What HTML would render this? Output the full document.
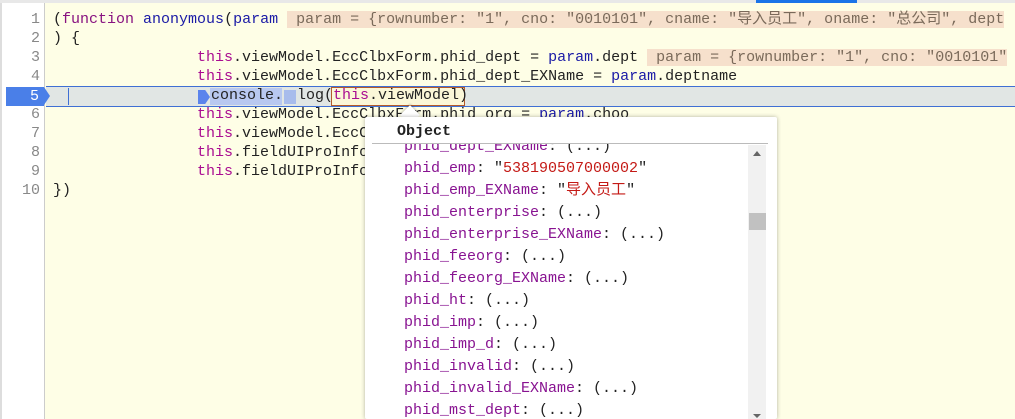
<!DOCTYPE html>
<html style="overflow:hidden"><head><meta charset="utf-8"><style>
*{margin:0;padding:0;box-sizing:border-box}
html,body{width:1015px;height:419px;overflow:hidden}
body{background:#fefee6;position:relative;font-family:"Liberation Mono","Noto Sans CJK SC",monospace;font-size:15px}
.topbar{position:absolute;left:0;top:0;width:1015px;height:3px;background:#e8e8e8}
.topblue{position:absolute;left:756px;top:0;width:101px;height:3px;background:#1a73e8}
.gutter{position:absolute;left:0;top:3px;width:45px;height:416px;background:#fff;border-left:2px solid #ddd;border-right:1px solid #ccc}
.ln{position:absolute;left:0;width:40px;text-align:right;color:#888;line-height:19px}
.code{position:absolute;left:53px;white-space:pre;line-height:19px;color:#222}
.k{color:#881280}.n{color:#1a1aa6}.kw{color:#aa0d91}
.inl{background:#f6e0cc;color:#7a6a5a}
.hl{position:absolute;left:46px;top:86px;width:969px;height:21px;background:#e1e6e4;border-top:1px solid #3f6fd4;border-bottom:1px solid #3f6fd4}
.ln5{position:absolute;left:6px;top:87px;width:38px;height:19px;background:#4a7fe8;color:#fff;text-align:right;padding-right:5px;line-height:19px}
.ln5:after{content:"";position:absolute;right:-6px;top:0;border-left:6px solid #4a7fe8;border-top:9.5px solid transparent;border-bottom:9.5px solid transparent}
.pop{position:absolute;left:365px;top:117px;width:412px;height:302px;background:#fff;box-shadow:0 0 4px rgba(0,0,0,.3);border-radius:2px}
.pop .hd{position:absolute;left:32px;top:6px;font-weight:bold;color:#222}
.pop .sep{position:absolute;left:7px;top:26px;width:396px;height:1px;background:#bbb}
.row{position:absolute;left:39px;line-height:22px;white-space:pre;color:#222}
.row .k{color:#881391}.s{color:#c41a16}
.sb{position:absolute;left:748px;top:145px;width:18px;height:274px;background:#f1f1f1}
</style></head><body>
<div class="topbar"></div><div class="topblue"></div>
<div class="gutter"></div>
<div class="hl"></div>
<div style="position:absolute;left:68px;top:88px;width:1px;height:17px;background:#3f6fd4"></div>
<div class="ln" style="top:10px">1</div>
<div class="ln" style="top:29px">2</div>
<div class="ln" style="top:48px">3</div>
<div class="ln" style="top:67px">4</div>
<div class="ln5">5</div>
<div class="ln" style="top:105px">6</div>
<div class="ln" style="top:124px">7</div>
<div class="ln" style="top:143px">8</div>
<div class="ln" style="top:162px">9</div>
<div class="ln" style="top:181px">10</div>
<div class="code" style="top:10px">(<span class="k">function</span> <span class="n">anonymous</span>(<span class="n">param</span> <span class="inl"> param = {rownumber: "1", cno: "0010101", cname: "导入员工", oname: "总公司", dept</span></div>
<div class="code" style="top:29px">) {</div>
<div class="code" style="top:48px">                <span class="kw">this</span>.viewModel.EccClbxForm.phid_dept = <span class="n">param</span>.dept <span class="inl"> param = {rownumber: "1", cno: "0010101"</span></div>
<div class="code" style="top:67px">                <span class="kw">this</span>.viewModel.EccClbxForm.phid_dept_EXName = <span class="n">param</span>.deptname</div>
<div style="position:absolute;left:198px;top:90px;width:12px;height:14px;background:#5b84ec;clip-path:polygon(0 0,60% 0,100% 50%,60% 100%,0 100%)"></div>
<div style="position:absolute;left:210px;top:88px;width:72px;height:17px;background:#b8c8f0"></div>
<div style="position:absolute;left:284px;top:90px;width:12px;height:14px;background:#a8bcec"></div>
<div style="position:absolute;left:331px;top:87px;width:134px;height:19px;border:1px solid #b45a2a;background:#fbf7d8"></div>
<div class="code" style="top:86px;left:211px">console.</div>
<div class="code" style="top:86px;left:297px">log(</div>
<div class="code" style="top:86px;left:333px"><span class="kw">this</span>.viewModel)</div>
<div class="code" style="top:105px">                <span class="kw">this</span>.viewModel.EccClbxForm.phid_org = <span class="n">param</span>.choo</div>
<div class="code" style="top:124px">                <span class="kw">this</span>.viewModel.EccC</div>
<div class="code" style="top:143px">                <span class="kw">this</span>.fieldUIProInfo</div>
<div class="code" style="top:162px">                <span class="kw">this</span>.fieldUIProInfo</div>
<div class="code" style="top:181px">})</div>
<div style="position:absolute;left:403px;top:108px;width:14px;height:14px;background:#fff;transform:rotate(45deg);box-shadow:-1px -1px 2px rgba(0,0,0,.2)"></div>
<div class="pop">
<div class="hd">Object</div>
<div class="sep"></div>
<div style="position:absolute;left:0;top:27px;width:412px;height:275px;overflow:hidden">
<div class="row" style="top:-8px"><span class="k">phid_dept_EXName</span>: (...)</div>
<div class="row" style="top:14px"><span class="k">phid_emp</span>: "<span class="s">538190507000002</span>"</div>
<div class="row" style="top:36px"><span class="k">phid_emp_EXName</span>: "<span class="s">导入员工</span>"</div>
<div class="row" style="top:58px"><span class="k">phid_enterprise</span>: (...)</div>
<div class="row" style="top:80px"><span class="k">phid_enterprise_EXName</span>: (...)</div>
<div class="row" style="top:102px"><span class="k">phid_feeorg</span>: (...)</div>
<div class="row" style="top:124px"><span class="k">phid_feeorg_EXName</span>: (...)</div>
<div class="row" style="top:146px"><span class="k">phid_ht</span>: (...)</div>
<div class="row" style="top:168px"><span class="k">phid_imp</span>: (...)</div>
<div class="row" style="top:190px"><span class="k">phid_imp_d</span>: (...)</div>
<div class="row" style="top:212px"><span class="k">phid_invalid</span>: (...)</div>
<div class="row" style="top:234px"><span class="k">phid_invalid_EXName</span>: (...)</div>
<div class="row" style="top:256px"><span class="k">phid_mst_dept</span>: (...)</div>
</div>
</div>
<div class="sb"></div>
<div style="position:absolute;left:753px;top:151px;border-bottom:5px solid #666;border-left:4px solid transparent;border-right:4px solid transparent"></div>
<div style="position:absolute;left:749px;top:213px;width:17px;height:17px;background:#c1c1c1"></div>
<div style="position:absolute;left:753px;top:414px;border-top:4px solid #666;border-left:4px solid transparent;border-right:4px solid transparent"></div>
</body></html>
